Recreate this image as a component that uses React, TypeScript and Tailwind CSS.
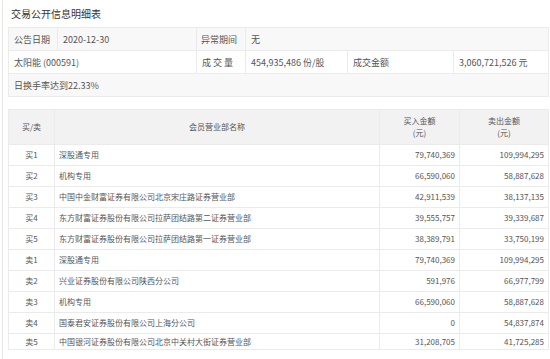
import React from "react";

const rows: [string, string, string, string][] = [
  ["买1", "深股通专用", "79,740,369", "109,994,295"],
  ["买2", "机构专用", "66,590,060", "58,887,628"],
  ["买3", "中国中金财富证券有限公司北京宋庄路证券营业部", "42,911,539", "38,137,135"],
  ["买4", "东方财富证券股份有限公司拉萨团结路第二证券营业部", "39,555,757", "39,339,687"],
  ["买5", "东方财富证券股份有限公司拉萨团结路第一证券营业部", "38,389,791", "33,750,199"],
  ["卖1", "深股通专用", "79,740,369", "109,994,295"],
  ["卖2", "兴业证券股份有限公司陕西分公司", "591,976", "66,977,799"],
  ["卖3", "机构专用", "66,590,060", "58,887,628"],
  ["卖4", "国泰君安证券股份有限公司上海分公司", "0", "54,837,874"],
  ["卖5", "中国银河证券股份有限公司北京中关村大街证券营业部", "31,208,705", "41,725,285"],
];

export default function App() {
  const font = { fontFamily: '"Noto Sans CJK SC", "Noto Sans", sans-serif' };
  return (
    <div className="w-[550px] h-[359px] overflow-hidden bg-white text-[#555]" style={font}>
      <div className="ml-[2px] h-full border-l border-[#e6e6e6] pl-[5px]">
        <div className="h-[27px] flex items-center pl-[3px] text-[10px] text-[#333]">交易公开信息明细表</div>
        <table className="table-fixed border-collapse w-[540px] text-[9px] leading-none">
          <colgroup>
            <col className="w-[49px]" />
            <col className="w-[139px]" />
            <col className="w-[49px]" />
            <col className="w-[102px]" />
            <col className="w-[106px]" />
            <col className="w-[95px]" />
          </colgroup>
          <tbody>
            <tr className="h-[23px] bg-[#f8f8f8]">
              <td className="border border-[#ebebeb] px-[5px]">公告日期</td>
              <td className="border border-[#ebebeb] px-[5px]">2020-12-30</td>
              <td className="border border-[#ebebeb] px-[4px]">异常期间</td>
              <td className="border border-[#ebebeb] px-[5px]" colSpan={3}>无</td>
            </tr>
            <tr className="h-[23px] bg-white">
              <td className="border border-[#ebebeb] px-[5px]" colSpan={2}>太阳能 (000591)</td>
              <td className="border border-[#ebebeb] px-[5px] whitespace-pre">成 交 量</td>
              <td className="border border-[#ebebeb] px-[5px]">454,935,486 份/股</td>
              <td className="border border-[#ebebeb] px-[5px]">成交金额</td>
              <td className="border border-[#ebebeb] px-[5px]">3,060,721,526 元</td>
            </tr>
            <tr className="h-[23px] bg-[#f8f8f8]">
              <td className="border border-[#ebebeb] px-[5px]" colSpan={6}>日换手率达到22.33%</td>
            </tr>
          </tbody>
        </table>
        <table className="mt-[12px] table-fixed border-collapse w-[540px] text-[8px] leading-none">
          <colgroup>
            <col className="w-[46px]" />
            <col className="w-[325px]" />
            <col className="w-[80px]" />
            <col className="w-[89px]" />
          </colgroup>
          <thead>
            <tr className="h-[35px] bg-[#f2f2f2]">
              <th className="border border-[#ebebeb] font-normal text-center">买/卖</th>
              <th className="border border-[#ebebeb] font-normal text-center">会员营业部名称</th>
              <th className="border border-[#ebebeb] font-normal text-center leading-[12px]">买入金额<br />(元)</th>
              <th className="border border-[#ebebeb] font-normal text-center leading-[12px]">卖出金额<br />(元)</th>
            </tr>
          </thead>
          <tbody>
            {rows.map((r, i) => (
              <tr key={i} className={i === rows.length - 1 ? "h-[16px]" : "h-[21px]"}>
                <td className="border border-[#ebebeb] text-center">{r[0]}</td>
                <td className="border border-[#ebebeb] px-[4px]">{r[1]}</td>
                <td className="border border-[#ebebeb] px-[4px] text-right">{r[2]}</td>
                <td className="border border-[#ebebeb] px-[4px] text-right">{r[3]}</td>
              </tr>
            ))}
          </tbody>
        </table>
      </div>
    </div>
  );
}
